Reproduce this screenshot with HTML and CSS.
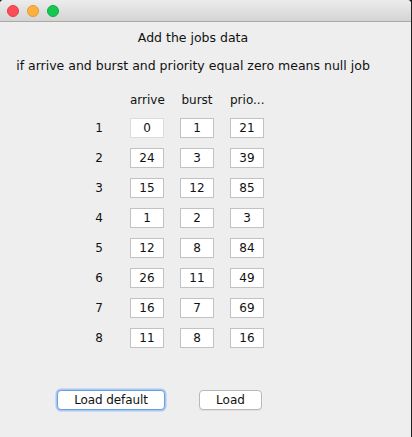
FILE: index.html
```html
<!DOCTYPE html>
<html>
<head>
<meta charset="utf-8">
<title>Add the jobs data</title>
<link rel="stylesheet" href="styles.css">
</head>
<body>
<div class="window">
  <div class="titlebar">
    <span class="light red"></span>
    <span class="light yellow"></span>
    <span class="light green"></span>
  </div>
  <div class="content">
    <div class="heading">Add the jobs data</div>
    <div class="note">if arrive and burst and priority equal zero means null job</div>
    <div class="grid">
      <div></div>
      <div class="col-head">arrive</div>
      <div class="col-head">burst</div>
      <div class="col-head">prio...</div>

      <div class="row-label">1</div>
      <div class="field light-border">0</div>
      <div class="field">1</div>
      <div class="field">21</div>

      <div class="row-label">2</div>
      <div class="field">24</div>
      <div class="field">3</div>
      <div class="field">39</div>

      <div class="row-label">3</div>
      <div class="field">15</div>
      <div class="field">12</div>
      <div class="field">85</div>

      <div class="row-label">4</div>
      <div class="field">1</div>
      <div class="field">2</div>
      <div class="field">3</div>

      <div class="row-label">5</div>
      <div class="field">12</div>
      <div class="field">8</div>
      <div class="field">84</div>

      <div class="row-label">6</div>
      <div class="field">26</div>
      <div class="field">11</div>
      <div class="field">49</div>

      <div class="row-label">7</div>
      <div class="field">16</div>
      <div class="field">7</div>
      <div class="field">69</div>

      <div class="row-label">8</div>
      <div class="field">11</div>
      <div class="field">8</div>
      <div class="field">16</div>
    </div>
    <div class="buttons">
      <button class="btn btn-default">Load default</button>
      <button class="btn btn-load">Load</button>
    </div>
  </div>
</div>
</body>
</html>
```

FILE: styles.css
```css
html, body {
  margin: 0;
  padding: 0;
  background: #1e1e1e;
}
body {
  width: 412px;
  height: 437px;
  overflow: hidden;
  font-family: "DejaVu Sans", "Liberation Sans", sans-serif;
  color: #111111;
}
.window {
  width: 411px;
  height: 437px;
  background: #eeeeee;
  border-radius: 4px 4px 0 0;
  overflow: hidden;
}
.titlebar {
  height: 22px;
  box-sizing: border-box;
  border-bottom: 1px solid #a9a9a9;
  background: linear-gradient(#ececec, #d4d4d4);
  display: flex;
  align-items: center;
  gap: 8px;
  padding-left: 7px;
  padding-top: 1px;
}
.light {
  width: 12px;
  height: 12px;
  border-radius: 50%;
  box-sizing: border-box;
}
.red { background: #fc4c55; border: 0.5px solid #e0434b; }
.yellow { background: #fdb13a; border: 0.5px solid #e09c32; }
.green { background: #13c84e; border: 0.5px solid #10ae44; }

.content {
  display: flex;
  flex-direction: column;
}
.heading, .note {
  width: 386px;
  text-align: center;
  font-size: 12.5px;
  line-height: 16px;
}
.heading { margin-top: 8px; }
.note { margin-top: 12px; }

.grid {
  display: grid;
  grid-template-columns: 30px 34px 34px 34px;
  grid-template-rows: 15px;
  grid-auto-rows: 20px;
  column-gap: 16px;
  row-gap: 10px;
  margin-left: 84px;
  margin-top: 19px;
  font-size: 12px;
}
.col-head {
  text-align: center;
  line-height: 15px;
  white-space: nowrap;
}
.row-label {
  display: flex;
  align-items: center;
  justify-content: center;
  line-height: 15px;
}
.field {
  background: #ffffff;
  border: 1px solid #c2c2c2;
  box-sizing: border-box;
  display: flex;
  align-items: center;
  justify-content: center;
  line-height: 15px;
}
.field.light-border {
  border-color: #dcdcdc;
}
.buttons {
  display: flex;
  gap: 34px;
  margin-left: 57px;
  margin-top: 42px;
}
.btn {
  font-family: "DejaVu Sans", "Liberation Sans", sans-serif;
  font-size: 12px;
  color: #111111;
  height: 20px;
  padding: 0;
  background: #ffffff;
  border: 1px solid #b8b8b8;
  border-radius: 4px;
  box-shadow: 0 1px 0 rgba(0,0,0,0.06);
  line-height: 18px;
}
.btn-default {
  width: 108px;
  border-color: #6a9fe6;
  box-shadow: 0 0 0 1.5px #a8c8f3;
  letter-spacing: -0.1px;
}
.btn-load {
  width: 63px;
}
```
